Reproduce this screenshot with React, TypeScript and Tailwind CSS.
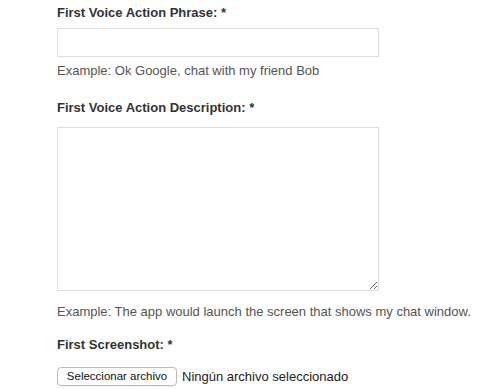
export default function App() {
  return (
    <div className="min-h-[389px] bg-white pl-[57px] font-['Liberation_Sans',Arial,sans-serif] text-[13px] leading-[18px]">
      <div className="pt-[4px]">
        <label className="block font-bold text-[#333]">First Voice Action Phrase: *</label>
        <input
          type="text"
          className="mt-[6px] block h-[29px] w-[322px] border border-[#ddd] bg-white outline-none"
        />
        <p className="mt-[5px] text-[#555]">Example: Ok Google, chat with my friend Bob</p>
      </div>

      <div className="mt-[19px]">
        <label className="block font-bold text-[#333]">First Voice Action Description: *</label>
        <textarea className="mt-[10px] block h-[164px] w-[322px] border border-[#ddd] bg-white outline-none" />
        <p className="mt-[12px] text-[#555]">
          Example: The app would launch the screen that shows my chat window.
        </p>
      </div>

      <div className="mt-[15px]">
        <label className="block font-bold text-[#333]">First Screenshot: *</label>
        <div className="mt-[13px] flex items-center gap-[5px]">
          <button className="h-[19px] w-[120px] rounded-[4px] border border-[#bbb] bg-white text-[11.5px] leading-[17px] text-[#111] shadow-[0_1px_0_rgba(0,0,0,0.05)]">
            Seleccionar archivo
          </button>
          <span className="text-[13px] text-[#222]">Ningún archivo seleccionado</span>
        </div>
      </div>
    </div>
  );
}
